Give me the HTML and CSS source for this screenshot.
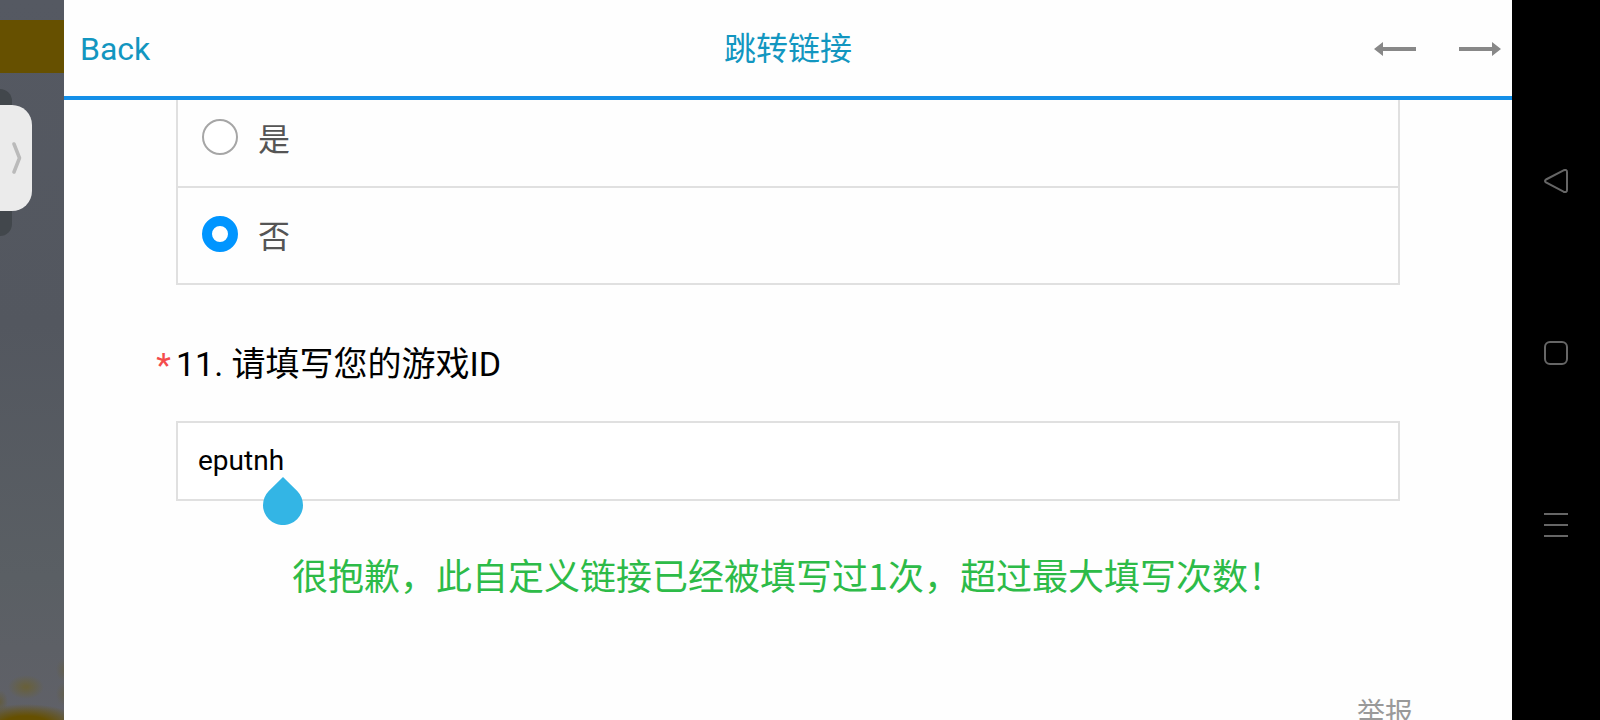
FILE: index.html
```html
<!DOCTYPE html>
<html lang="zh-CN">
<head>
<meta charset="utf-8">
<meta name="viewport" content="width=device-width, initial-scale=1">
<title>跳转链接</title>
<link rel="stylesheet" href="styles.css">
</head>
<body>
<div class="screen">
  <aside class="backdrop">
    <div class="band"></div>
    <div class="drawer-shadow"></div>
    <button class="drawer-handle" type="button" aria-label="展开">
      <svg width="10" height="32" viewBox="0 0 10 32"><path d="M2 2 L7.500 16 L2 30" fill="none" stroke="#bababa" stroke-width="3.500" stroke-linecap="round" stroke-linejoin="round"/></svg>
    </button>
    <div class="glow"></div>
  </aside>

  <div class="webview">
    <header class="topbar">
      <a class="back" href="#">Back</a>
      <h1 class="title">跳转链接</h1>
      <nav class="history">
        <button class="icon-button" type="button" aria-label="后退">
          <svg width="42" height="14" viewBox="0 0 42 14" fill="#888"><path d="M0 7 L9 0 V5 H42 V9 H9 V14 Z"/></svg>
        </button>
        <button class="icon-button" type="button" aria-label="前进">
          <svg width="42" height="14" viewBox="0 0 42 14" fill="#888"><path d="M42 7 L33 0 V5 H0 V9 H33 V14 Z"/></svg>
        </button>
      </nav>
    </header>

    <main class="content">
      <form class="survey">
        <div class="options">
          <label class="option"><input class="radio" type="radio" name="q10"><span class="option-text">是</span></label>
          <label class="option"><input class="radio" type="radio" name="q10" checked><span class="option-text">否</span></label>
        </div>
        <label class="question" for="game-id"><span class="required">*</span>11. 请填写您的游戏ID</label>
        <div class="field">
          <input class="text-input" id="game-id" type="text" value="eputnh">
          <svg class="caret-handle" width="40" height="48" viewBox="0 0 40 48"><path d="M20 0 L34.200 14 A20 20 0 1 1 5.800 14 Z" fill="#33b5e5"/></svg>
        </div>
        <p class="message">很抱歉，此自定义链接已经被填写过1次，超过最大填写次数！</p>
      </form>
      <a class="report" href="#">举报</a>
    </main>
  </div>

  <nav class="system-nav">
    <button class="icon-button" type="button" aria-label="返回">
      <svg width="24" height="24" viewBox="0 0 24 24"><path d="M2 10.500 L19.500 1.300 Q23 0 23 3 V21 Q23 24 19.500 22.700 L2 13.500 Q0 12 2 10.500 Z"/></svg>
    </button>
    <button class="icon-button" type="button" aria-label="主页">
      <svg width="24" height="24" viewBox="0 0 24 24"><rect x="1" y="1" width="22" height="22" rx="5"/></svg>
    </button>
    <button class="icon-button" type="button" aria-label="最近任务">
      <svg width="24" height="24" viewBox="0 0 24 24"><path d="M0 1 H24 M0 12 H24 M0 23 H24"/></svg>
    </button>
  </nav>
</div>
</body>
</html>
```
FILE: styles.css
```css
* {
  box-sizing: border-box;
}

body {
  margin: 0;
  font-family: Roboto, "Noto Sans CJK SC", sans-serif;
  background: #000;
}

.screen {
  display: grid;
  grid-template-columns: 64px 1fr 88px;
  height: 100vh;
  overflow: hidden;
}

.icon-button {
  display: block;
  padding: 0;
  border: 0;
  background: none;
}

.icon-button svg {
  display: block;
}

/* Dimmed game behind the web view */
.backdrop {
  position: relative;
  overflow: hidden;
  padding-top: 20px;
  background: linear-gradient(#555962 0%, #53575f 45%, #5a5f64 80%, #606168 100%);
}

.band {
  height: 53px;
  background: #665000;
}

.drawer-shadow {
  position: absolute;
  top: 89px;
  left: 0;
  width: 12px;
  height: 147px;
  border-radius: 0 12px 12px 0;
  background: #42474c;
}

.drawer-handle {
  position: absolute;
  top: 105px;
  left: 0;
  display: flex;
  align-items: center;
  justify-content: flex-end;
  width: 32px;
  height: 106px;
  padding: 0 10px 0 0;
  border: 0;
  border-radius: 0 20px 20px 0;
  background: #ebebeb;
}

.glow {
  position: absolute;
  right: 0;
  bottom: 0;
  left: 0;
  height: 64px;
  background:
    radial-gradient(ellipse 18px 12px at 26px 31px, #68603c 10%, transparent),
    radial-gradient(ellipse 8px 12px at 64px 14px, #625f50, transparent),
    radial-gradient(ellipse 8px 12px at 64px 38px, #625f50, transparent),
    radial-gradient(ellipse 8px 12px at 0 46px, #625c42, transparent),
    radial-gradient(ellipse 56px 20px at 26px 68px, #665000 40%, transparent);
}

.webview {
  display: flex;
  flex-direction: column;
  min-width: 0;
  min-height: 0;
  background: #fefefe;
}

.topbar {
  display: grid;
  grid-template-columns: 1fr auto 1fr;
  flex: none;
  align-items: center;
  height: 100px;
  padding: 2px 11px 0;
  border-bottom: 4px solid #148fe8;
  font-size: 32px;
  line-height: 48px;
  color: #1296c0;
}

.back {
  justify-self: start;
  padding-left: 5px;
  color: inherit;
  text-decoration: none;
}

.title {
  margin: 0;
  font-size: 32px;
  font-weight: 400;
}

.history {
  display: flex;
  gap: 43px;
  justify-self: end;
}

.content {
  display: flex;
  flex: 1;
  flex-direction: column;
  min-height: 0;
  overflow: hidden;
  padding: 0 99px 0 100px;
}

.survey {
  padding: 0 13px 0 12px;
}

/* The list is scrolled slightly under the top bar */
.options {
  margin-top: -11px;
  border: 2px solid #e0e0e0;
}

.option {
  display: flex;
  align-items: center;
  gap: 20px;
  height: 95px;
  padding: 0 24px 3px;
  font-size: 32px;
  line-height: 48px;
  color: #555;
}

.option + .option {
  height: 97px;
  border-top: 2px solid #e0e0e0;
}

.option-text {
  padding-top: 6px;
}

.radio {
  appearance: none;
  width: 36px;
  height: 36px;
  margin: 0;
  border: 2px solid #a6a6a6;
  border-radius: 50%;
  background: #fff;
}

.radio:checked {
  border: 10px solid #0095ff;
}

.question {
  display: block;
  position: relative;
  margin-top: 55px;
  font-size: 34px;
  line-height: 48px;
  color: #000;
}

.required {
  position: absolute;
  right: 100%;
  padding: 1px 5px 0 0;
  color: #f44c4c;
}

.field {
  position: relative;
  margin-top: 33px;
}

.text-input {
  display: block;
  width: 100%;
  height: 80px;
  padding: 0 20px 2px;
  border: 2px solid #e0e0e0;
  outline: 0;
  background: #fff;
  font-family: inherit;
  font-size: 28px;
  color: #000;
}

.caret-handle {
  position: absolute;
  top: 56px;
  left: 87px;
}

.message {
  margin: 49px 0 0;
  font-family: "Noto Sans CJK SC", sans-serif;
  font-size: 36px;
  line-height: 48px;
  text-align: center;
  color: #2dbb48;
}

.report {
  align-self: flex-end;
  margin-top: 100px;
  font-size: 28px;
  line-height: 32px;
  color: #999;
  text-decoration: none;
}

.system-nav {
  display: flex;
  flex-direction: column;
  align-items: center;
  justify-content: center;
  gap: 148px;
  padding-bottom: 14px;
  background: #000;
}

.system-nav svg {
  fill: none;
  stroke: #666;
  stroke-width: 2;
}
```
